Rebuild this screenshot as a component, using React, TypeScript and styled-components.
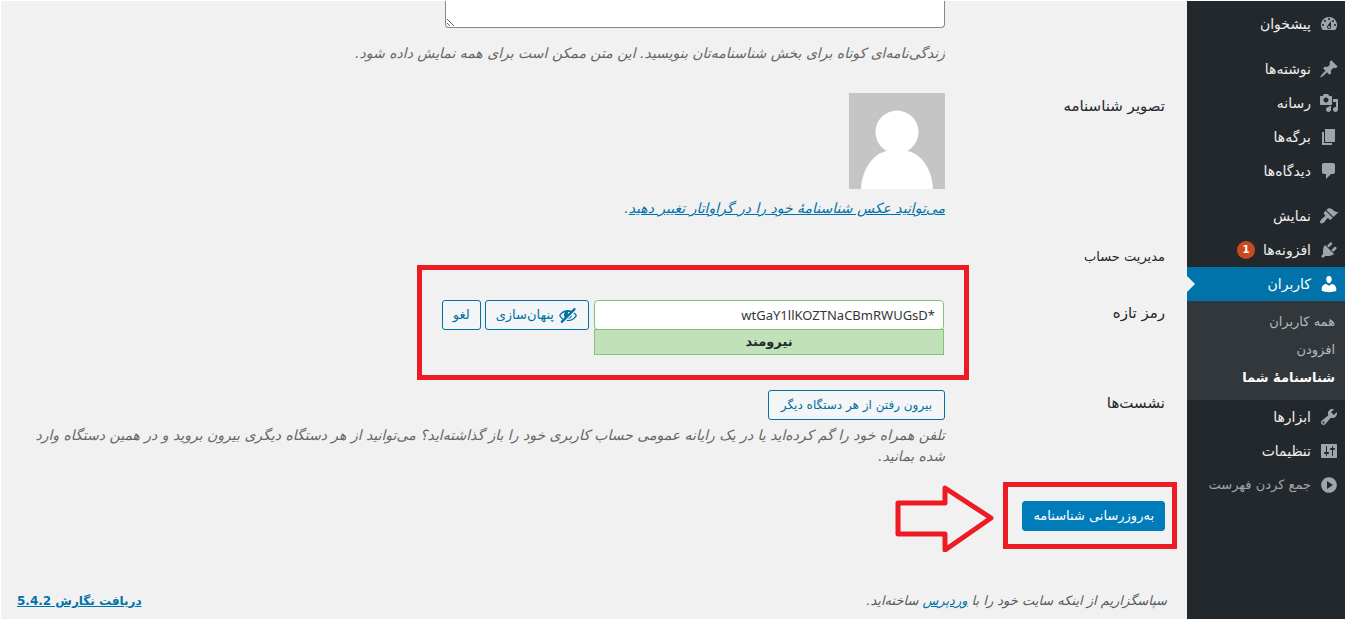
import React from "react";
import styled, { createGlobalStyle, css } from "styled-components";

const GlobalStyle = createGlobalStyle`
  *, *::before, *::after { box-sizing: border-box; }
  body {
    margin: 0;
    background: #f1f1f1;
    color: #444;
    font: 13px/20px "DejaVu Sans", sans-serif;
  }
  button, input, textarea { font: inherit; }
`;

const ICONS = {
  dashboard:
    "M3.76 16h12.48A7.998 7.998 0 0 0 10 3a7.998 7.998 0 0 0-6.24 13zM10 4c.55 0 1 .45 1 1s-.45 1-1 1-1-.45-1-1 .45-1 1-1zM6 6c.55 0 1 .45 1 1s-.45 1-1 1-1-.45-1-1 .45-1 1-1zm8 0c.55 0 1 .45 1 1s-.45 1-1 1-1-.45-1-1 .45-1 1-1zm-5.37 5.55L12 7v6c0 1.1-.9 2-2 2s-2-.9-2-2c0-.57.24-1.08.63-1.45zM4 10c.55 0 1 .45 1 1s-.45 1-1 1-1-.45-1-1 .45-1 1-1zm12 0c.55 0 1 .45 1 1s-.45 1-1 1-1-.45-1-1 .45-1 1-1zm-5 3c0-.55-.45-1-1-1s-1 .45-1 1 .45 1 1 1 1-.45 1-1z",
  post:
    "M10.44 3.02l1.82-1.82 6.36 6.35-1.83 1.82c-1.05-.68-2.48-.57-3.41.36l-.75.75c-.92.93-1.04 2.35-.35 3.41l-1.83 1.82-2.41-2.41-2.8 2.79c-.42.42-3.38 2.71-3.8 2.29s1.86-3.39 2.28-3.81l2.79-2.79L4.1 9.36l1.83-1.82c1.05.69 2.48.57 3.4-.36l.75-.75c.93-.92 1.05-2.35.36-3.41z",
  media:
    "M13 11V4c0-.55-.45-1-1-1h-1.67L9 1H5L3.67 3H2c-.55 0-1 .45-1 1v7c0 .55.45 1 1 1h10c.55 0 1-.45 1-1zM7 4.5c1.38 0 2.5 1.12 2.5 2.5S8.38 9.5 7 9.5 4.5 8.38 4.5 7 5.62 4.5 7 4.5zM14 6h5v10.5c0 1.38-1.12 2.5-2.5 2.5S14 17.88 14 16.5s1.12-2.5 2.5-2.5c.17 0 .34.02.5.05V9h-3V6zm-4 8.05V13h2v3.5c0 1.38-1.12 2.5-2.5 2.5S7 17.88 7 16.5 8.12 14 9.5 14c.17 0 .34.02.5.05z",
  page: "M6 15V2h10v13H6zm-1 1h8v2H3V5h2v11z",
  comments:
    "M5 2h9c1.1 0 2 .9 2 2v7c0 1.1-.9 2-2 2h-2l-5 5v-5H5c-1.1 0-2-.9-2-2V4c0-1.1.9-2 2-2z",
  appearance:
    "M14.48 11.06L7.41 3.99l1.5-1.5c.5-.56 2.3-.47 3.51.32 1.21.8 1.43 1.28 2.91 2.1 1.18.64 2.45 1.26 4.45.85zm-.71.71L6.7 4.7 4.93 6.47c-.39.39-.39 1.02 0 1.41l1.06 1.06c.39.39.39 1.03 0 1.42-.6.6-1.43 1.11-2.21 1.69-.35.26-.7.53-1.01.84C1.43 14.23.4 16.08 1.4 17.07c.99 1 2.84-.03 4.18-1.36.31-.31.58-.66.85-1.02.57-.78 1.08-1.61 1.69-2.21.39-.39 1.02-.39 1.41 0l1.06 1.06c.39.39 1.02.39 1.41 0z",
  plugins:
    "M13.11 4.36L9.87 7.6 8 5.73l3.24-3.24c.35-.34 1.05-.2 1.56.32.52.51.66 1.21.31 1.55zm-8 1.77l.91-1.12 9.01 9.01-1.19.84c-.71.71-2.63 1.16-3.82 1.16H6.14L4.9 17.26c-.59.59-1.54.59-2.12 0-.59-.58-.59-1.53 0-2.12l1.24-1.24v-3.88c0-1.13.4-3.19 1.09-3.89zm7.26 3.97l3.24-3.24c.34-.35 1.04-.21 1.55.31.52.51.66 1.21.31 1.55l-3.24 3.25z",
  users:
    "M10 9.25c-2.27 0-2.73-3.44-2.73-3.44C7 4.02 7.82 2 9.97 2c2.16 0 2.98 2.02 2.71 3.81 0 0-.41 3.44-2.68 3.44zm0 2.57L12.72 10c2.39 0 4.52 2.33 4.52 4.53v2.49s-3.65 1.13-7.24 1.13c-3.65 0-7.24-1.13-7.24-1.13v-2.49c0-2.25 1.94-4.48 4.47-4.48z",
  tools:
    "M16.68 9.77c-1.34 1.34-3.3 1.67-4.95.99l-5.41 6.52c-.99.99-2.59.99-3.58 0s-.99-2.59 0-3.57l6.52-5.42c-.68-1.65-.35-3.61.99-4.95 1.28-1.28 3.12-1.62 4.72-1.06l-2.89 2.89 2.82 2.82 2.86-2.87c.53 1.58.18 3.39-1.08 4.65zM3.81 16.21c.4.39 1.04.39 1.43 0 .4-.4.4-1.04 0-1.43-.39-.4-1.03-.4-1.43 0-.39.39-.39 1.03 0 1.43z",
  settings:
    "M18 16V4c0-.55-.45-1-1-1H3c-.55 0-1 .45-1 1v12c0 .55.45 1 1 1h14c.55 0 1-.45 1-1zM8 11h1c.55 0 1 .45 1 1s-.45 1-1 1H8v1.5c0 .28-.22.5-.5.5s-.5-.22-.5-.5V13H6c-.55 0-1-.45-1-1s.45-1 1-1h1V5.5c0-.28.22-.5.5-.5s.5.22.5.5V11zm5-2h-1c-.55 0-1-.45-1-1s.45-1 1-1h1V5.5c0-.28.22-.5.5-.5s.5.22.5.5V7h1c.55 0 1 .45 1 1s-.45 1-1 1h-1v5.5c0 .28-.22.5-.5.5s-.5-.22-.5-.5V9z",
  collapse:
    "M10 2.16c-4.33 0-7.84 3.51-7.84 7.84s3.51 7.84 7.84 7.84 7.84-3.51 7.84-7.84S14.29 2.16 10 2.16zm-2 11.72V6.12l5.82 3.85z",
  hidden:
    "M17.2 3.3l.16.17c.39.39.39 1.02 0 1.41L4.55 17.7c-.39.39-1.03.39-1.41 0l-.17-.17c-.39-.39-.39-1.02 0-1.41l1.59-1.6c-1.57-1-2.76-2.3-3.56-3.93.81-1.65 2.03-2.98 3.64-3.99S8.04 5.09 10 5.09c1.2 0 2.33.21 3.4.6l2.38-2.39c.39-.39 1.03-.39 1.42 0zm-7.09 4.01c-.23.25-.34.54-.34.88 0 .31.12.58.31.81l1.8-1.79c-.13-.12-.28-.21-.45-.26-.11-.01-.28-.03-.49-.04-.33.03-.6.16-.83.4zM2.4 10.59c.69 1.23 1.71 2.25 3.05 3.05l1.28-1.28c-.51-.69-.77-1.47-.77-2.36 0-1.06.36-1.98 1.09-2.76-1.04.27-1.96.7-2.76 1.26-.8.58-1.43 1.27-1.89 2.09zm13.22-2.13l.96-.96c1.02.86 1.83 1.89 2.42 3.09-.81 1.65-2.03 2.98-3.64 3.99s-3.4 1.51-5.36 1.51c-.63 0-1.24-.07-1.83-.18l1.07-1.07c.25.02.5.05.76.05 1.63 0 3.13-.4 4.5-1.21s2.4-1.84 3.1-3.09c-.46-.82-1.09-1.51-1.89-2.09-.03-.01-.06-.03-.09-.04zm-5.58 5.58l4-4c-.01 1.1-.41 2.04-1.18 2.81-.78.78-1.72 1.18-2.82 1.19z",
};

type IconName = keyof typeof ICONS;

const IconSvg = styled.svg`
  flex: none;
  width: 20px;
  height: 20px;
  fill: currentColor;
`;

const Icon = ({ name }: { name: IconName }) => (
  <IconSvg viewBox="0 0 20 20" aria-hidden="true">
    <path d={ICONS[name]} />
  </IconSvg>
);

const Page = styled.div`
  display: flex;
  min-height: 100vh;
  border-top: 1px solid #fff;
  border-left: 1px solid #fff;
`;

/* ---------- admin menu ---------- */

const Sidebar = styled.nav`
  flex: none;
  width: 158px;
  padding-top: 6px;
  background: #23282d;
`;

const MenuList = styled.ul`
  margin: 0;
  padding: 0;
  list-style: none;
`;

const MenuItem = styled.li<{ $gap?: boolean }>`
  margin-top: ${(p) => (p.$gap ? 11 : 0)}px;
`;

const menuRow = css`
  display: flex;
  align-items: center;
  gap: 8px;
  width: 100%;
  height: 34px;
  padding: 0 6px;
  border: 0;
  text-decoration: none;
  white-space: nowrap;
  cursor: pointer;
`;

const MenuLink = styled.a<{ $current?: boolean }>`
  ${menuRow}
  position: relative;
  color: ${(p) => (p.$current ? "#fff" : "#eee")};
  background: ${(p) => (p.$current ? "#0073aa" : "transparent")};
  font-size: 14px;

  svg {
    color: ${(p) => (p.$current ? "#fff" : "#a0a5aa")};
  }

  ${(p) =>
    p.$current &&
    css`
      &::after {
        content: "";
        position: absolute;
        left: 0;
        top: 9px;
        border: 8px solid transparent;
        border-left-color: #f1f1f1;
        border-right-width: 0;
      }
    `}
`;

const CollapseButton = styled.button`
  ${menuRow}
  background: none;
  color: #a0a5aa;
`;

const Badge = styled.span`
  min-width: 18px;
  height: 18px;
  border-radius: 9px;
  background: #ca4a1f;
  color: #fff;
  font-size: 10px;
  font-weight: bold;
  line-height: 18px;
  text-align: center;
`;

const SubMenu = styled.ul`
  margin: 0;
  padding: 7px 0 8px;
  list-style: none;
  background: #32373c;
`;

const SubLink = styled.a<{ $current?: boolean }>`
  display: block;
  padding: 4px 10px;
  color: ${(p) => (p.$current ? "#fff" : "#b4b9be")};
  font-weight: ${(p) => (p.$current ? "bold" : "normal")};
  text-decoration: none;
`;

/* ---------- profile form ---------- */

const Content = styled.main`
  display: flex;
  flex: 1;
  flex-direction: column;
  min-width: 0;
  padding: 0 20px 8px 16px;
`;

const Form = styled.form`
  display: flex;
  flex-direction: column;
  padding-right: 2px;
`;

const Row = styled.div<{ $top: number }>`
  display: grid;
  grid-template-columns: 220px minmax(0, 1fr);
  margin-top: ${(p) => p.$top}px;
`;

const rowLabel = css`
  padding-top: 3px;
  color: #23282d;
  font-size: 15px;
  line-height: 20px;
`;

const RowLabel = styled.label`
  ${rowLabel}
`;

const RowTitle = styled.span`
  ${rowLabel}
`;

const Field = styled.div`
  grid-column: 2;
`;

const BioInput = styled.textarea`
  display: block;
  width: 500px;
  max-width: 100%;
  height: 27px;
  border: 1px solid #7e8993;
  border-top: 0;
  border-radius: 0 0 4px 4px;
  background: #fff;
  resize: vertical;
`;

const Hint = styled.p<{ $top: number }>`
  margin: ${(p) => p.$top}px 0 0;
  color: #666;
  font-size: 14px;
  font-style: italic;
  line-height: 21px;
`;

const Link = styled.a`
  color: #0073aa;
`;

const Avatar = styled.svg`
  display: block;
  width: 96px;
  height: 96px;
`;

const SectionTitle = styled.h2`
  margin: 28px 0 0;
  color: #23282d;
  font-size: 13px;
  font-weight: normal;
  line-height: 20px;
`;

const PasswordTools = styled.div`
  position: relative;
  display: flex;
  flex-wrap: wrap;
  align-items: flex-start;
  gap: 4px;
`;

const PasswordBox = styled.div`
  width: 352px;
  padding: 0 1px;
`;

const PasswordInput = styled.input`
  display: block;
  width: 100%;
  height: 30px;
  padding: 0 8px;
  border: 1px solid #83c373;
  border-radius: 4px;
  background: #fff;
  color: #32373c;
  font-family: "Noto Sans", "Open Sans", sans-serif;
  font-size: 13px;
  text-align: right;
`;

const Strength = styled.output`
  display: block;
  margin-top: -1px;
  border: 1px solid #83c373;
  background: #c1e1b9;
  color: #23282d;
  font-size: 13px;
  font-weight: bold;
  line-height: 24px;
  text-align: center;
`;

const Button = styled.button<{ $primary?: boolean; $compact?: boolean }>`
  display: inline-flex;
  align-items: center;
  justify-content: center;
  gap: 4px;
  height: 30px;
  padding: 0 ${(p) => (p.$compact ? 12 : 10)}px;
  border: 1px solid ${(p) => (p.$primary ? "#007cba" : "#0071a1")};
  border-radius: 3px;
  background: ${(p) => (p.$primary ? "#007cba" : "#f3f5f6")};
  color: ${(p) => (p.$primary ? "#fff" : "#0071a1")};
  font-size: ${(p) => (p.$compact ? 12 : 13)}px;
  white-space: nowrap;
  cursor: pointer;
`;

const SubmitRow = styled.div`
  position: relative;
  align-self: flex-start;
  margin-top: 34px;
`;

const PasswordMark = styled.div`
  position: absolute;
  top: -35px;
  right: -24px;
  width: 552px;
  height: 115px;
  border: 5px solid #ed1c24;
  pointer-events: none;
`;

const SubmitMark = styled.div`
  position: absolute;
  inset: -19px -12px -18px -19px;
  border: 5px solid #ed1c24;
  pointer-events: none;
`;

const ArrowMark = styled.svg`
  position: absolute;
  top: -17px;
  right: calc(100% + 27px);
  width: 100px;
  height: 68px;
  fill: none;
  stroke: #ed1c24;
  stroke-width: 5;
  stroke-linejoin: round;
  pointer-events: none;
`;

const Footer = styled.footer`
  display: flex;
  justify-content: space-between;
  margin-top: auto;
  color: #555d66;
`;

const Thanks = styled.span`
  font-style: italic;
`;

const VersionLink = styled(Link)`
  font-size: 12px;
  font-weight: bold;
`;

interface Entry {
  icon: IconName;
  text: string;
  gap?: boolean;
  count?: number;
  children?: { text: string; current?: boolean }[];
}

const MENU: Entry[] = [
  { icon: "dashboard", text: "پیشخوان" },
  { icon: "post", text: "نوشته‌ها", gap: true },
  { icon: "media", text: "رسانه" },
  { icon: "page", text: "برگه‌ها" },
  { icon: "comments", text: "دیدگاه‌ها" },
  { icon: "appearance", text: "نمایش", gap: true },
  { icon: "plugins", text: "افزونه‌ها", count: 1 },
  {
    icon: "users",
    text: "کاربران",
    children: [
      { text: "همه کاربران" },
      { text: "افزودن" },
      { text: "شناسنامهٔ شما", current: true },
    ],
  },
  { icon: "tools", text: "ابزارها" },
  { icon: "settings", text: "تنظیمات" },
];

export default function App() {
  return (
    <Page dir="rtl" lang="fa">
      <GlobalStyle />
      <Sidebar>
        <MenuList>
          {MENU.map((m) => (
            <MenuItem key={m.text} $gap={m.gap}>
              <MenuLink href="#" $current={!!m.children}>
                <Icon name={m.icon} />
                {m.text}
                {m.count && <Badge>{m.count}</Badge>}
              </MenuLink>
              {m.children && (
                <SubMenu>
                  {m.children.map((c) => (
                    <li key={c.text}>
                      <SubLink href="#" $current={c.current}>
                        {c.text}
                      </SubLink>
                    </li>
                  ))}
                </SubMenu>
              )}
            </MenuItem>
          ))}
          <MenuItem>
            <CollapseButton type="button">
              <Icon name="collapse" />
              جمع کردن فهرست
            </CollapseButton>
          </MenuItem>
        </MenuList>
      </Sidebar>

      <Content>
        <Form onSubmit={(e) => e.preventDefault()}>
          <Row $top={0}>
            <Field>
              <BioInput aria-label="زندگی‌نامه" />
              <Hint $top={15}>
                زندگی‌نامه‌ای کوتاه برای بخش شناسنامه‌تان بنویسید. این متن ممکن است برای همه نمایش داده شود.
              </Hint>
            </Field>
          </Row>

          <Row $top={29}>
            <RowTitle>تصویر شناسنامه</RowTitle>
            <Field>
              <Avatar viewBox="0 0 96 96" role="img" aria-label="تصویر شناسنامه">
                <rect width="96" height="96" fill="#c5c5c5" />
                <circle cx="48" cy="39" r="21.5" fill="#fff" />
                <path d="M12 96C13 77 23 62 37 58Q48 53 59 58C74 62 83 77 84 96Z" fill="#fff" />
              </Avatar>
              <Hint $top={9}>
                <Link href="#">می‌توانید عکس شناسنامهٔ خود را در گراواتار تغییر دهید</Link>.
              </Hint>
            </Field>
          </Row>

          <SectionTitle>مدیریت حساب</SectionTitle>

          <Row $top={33}>
            <RowLabel htmlFor="new-password">رمز تازه</RowLabel>
            <Field>
              <PasswordTools>
                <PasswordBox>
                  <PasswordInput id="new-password" dir="ltr" defaultValue="wtGaY1llKOZTNaCBmRWUGsD*" />
                  <Strength htmlFor="new-password">نیرومند</Strength>
                </PasswordBox>
                <Button type="button">
                  <Icon name="hidden" />
                  پنهان‌سازی
                </Button>
                <Button type="button">لغو</Button>
                <PasswordMark />
              </PasswordTools>
            </Field>
          </Row>

          <Row $top={35}>
            <RowTitle>نشست‌ها</RowTitle>
            <Field>
              <Button type="button" $compact>
                بیرون رفتن از هر دستگاه دیگر
              </Button>
              <Hint $top={5}>
                تلفن همراه خود را گم کرده‌اید یا در یک رایانه عمومی حساب کاربری خود را باز گذاشته‌اید؟ می‌توانید از هر دستگاه دیگری بیرون بروید و در همین دستگاه وارد شده بمانید.
              </Hint>
            </Field>
          </Row>

          <SubmitRow>
            <Button type="submit" $primary>
              به‌روزرسانی شناسنامه
            </Button>
            <SubmitMark />
            <ArrowMark viewBox="0 0 100 68" aria-hidden="true">
              <path d="M3 19H50V4L96 34L50 66V50H3Z" />
            </ArrowMark>
          </SubmitRow>
        </Form>

        <Footer>
          <Thanks>
            سپاسگزاریم از اینکه سایت خود را با <Link href="#">وردپرس</Link> ساخته‌اید.
          </Thanks>
          <VersionLink href="#">دریافت نگارش 5.4.2</VersionLink>
        </Footer>
      </Content>
    </Page>
  );
}
